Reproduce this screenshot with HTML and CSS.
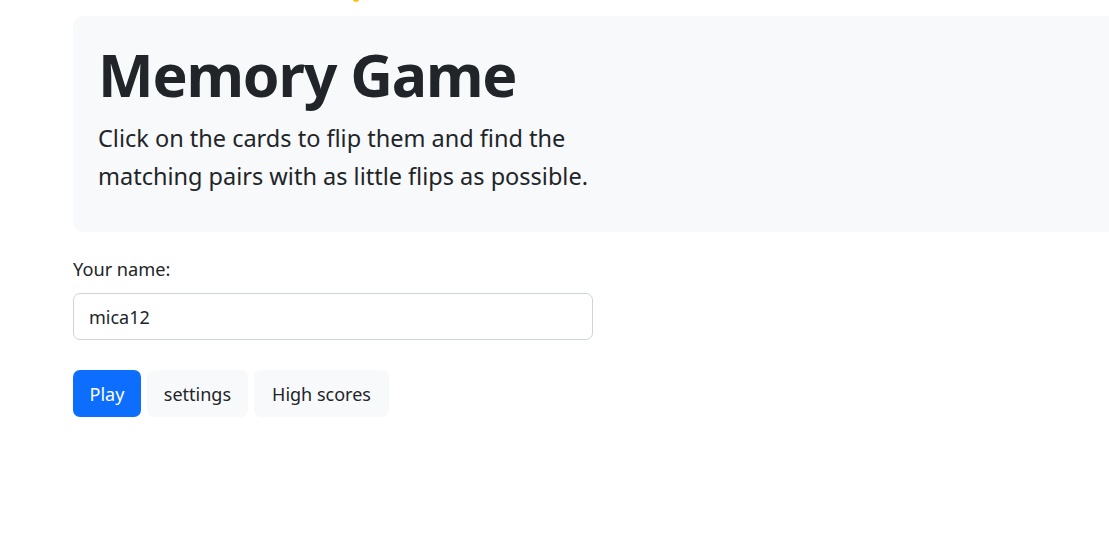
FILE: index.html
```html
<!DOCTYPE html>
<html lang="en">
<head>
<meta charset="utf-8">
<title>Memory Game</title>
<link rel="stylesheet" href="styles.css">
</head>
<body>
<span class="dot"></span>
<main class="page">
  <section class="hero">
    <h1 class="hero-title">Memory Game</h1>
    <p class="hero-lead">Click on the cards to flip them and find the matching pairs with as little flips as possible.</p>
  </section>
  <form class="name-form">
    <label class="name-label" for="name">Your name:</label>
    <input class="name-input" id="name" type="text" value="mica12">
    <div class="actions">
      <button type="button" class="btn btn-primary">Play</button>
      <button type="button" class="btn btn-light btn-mid">settings</button>
      <button type="button" class="btn btn-light btn-wide">High scores</button>
    </div>
  </form>
</main>
</body>
</html>
```

FILE: styles.css
```css
* { box-sizing: border-box; }
html, body { margin: 0; padding: 0; }
body {
  font-family: "Noto Sans", "Open Sans", sans-serif;
  color: #212529;
  background: #fff;
  overflow: hidden;
  position: relative;
  height: 560px;
}
.dot {
  position: absolute;
  left: 353px;
  top: -3px;
  width: 6px;
  height: 5px;
  border-radius: 50%;
  background: #ffc107;
}
.page {
  padding: 16px 0 0 73px;
  overflow: hidden;
}
.hero {
  height: 216px;
  margin-right: -20px;
  background: #f8f9fa;
  border-radius: 10px;
  padding: 23px 24px 0 25px;
}
.hero-title {
  margin: 0;
  font-size: 59px;
  font-weight: 700;
  line-height: 71px;
  letter-spacing: -1.2px;
}
.hero-lead {
  margin: 9px 0 0;
  width: 560px;
  font-size: 23.5px;
  line-height: 38px;
}
.name-form {
  padding-top: 25px;
}
.name-label {
  display: block;
  font-size: 18.2px;
  line-height: 24px;
  margin-bottom: 12px;
}
.name-input {
  display: block;
  width: 520px;
  height: 47px;
  padding: 0 15px;
  font-family: inherit;
  font-size: 18px;
  color: #212529;
  border: 1px solid #ced4da;
  border-radius: 7px;
  background: #fff;
}
.actions {
  display: flex;
  gap: 6px;
  margin-top: 30px;
}
.btn {
  height: 47px;
  padding: 0 15.5px;
  font-family: inherit;
  font-size: 18px;
  border: 1px solid transparent;
  border-radius: 7px;
  cursor: pointer;
}
.btn-mid {
  padding: 0 16px;
}
.btn-wide {
  padding: 0 17px;
}
.btn-primary {
  background: #0d6efd;
  color: #fff;
}
.btn-light {
  background: #f8f9fa;
  color: #212529;
}
```
